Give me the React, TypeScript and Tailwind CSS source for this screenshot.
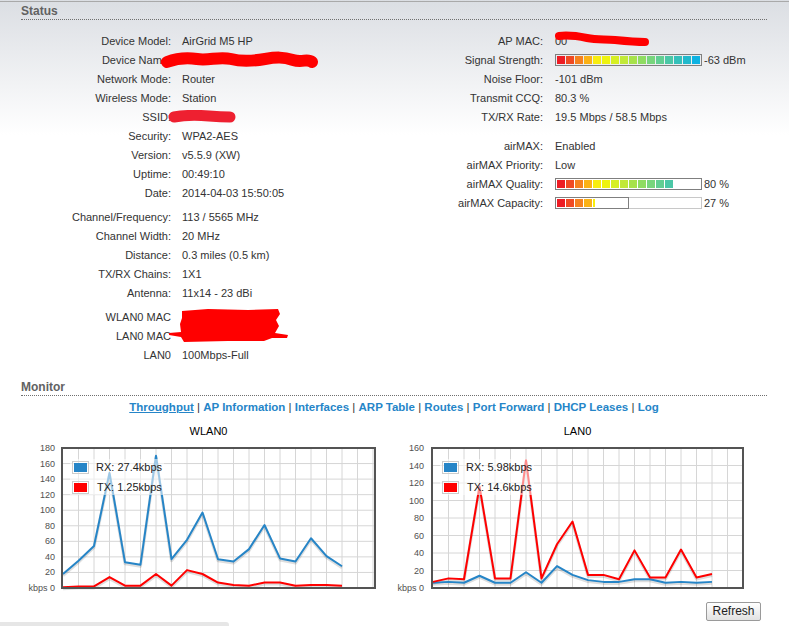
const SEG = [
  "bg-[#ed1c24]",
  "bg-[#f04a23]",
  "bg-[#f58220]",
  "bg-[#fbb216]",
  "bg-[#f8ed0e]",
  "bg-[#eef30f]",
  "bg-[#d6ef24]",
  "bg-[#c1e938]",
  "bg-[#a7e24a]",
  "bg-[#8fdc62]",
  "bg-[#78d57d]",
  "bg-[#62ce92]",
  "bg-[#4bc7a6]",
  "bg-[#35c0ba]",
  "bg-[#21b9cc]",
  "bg-[#0eb2e2]",
];

const TABS = [
  "Throughput",
  "AP Information",
  "Interfaces",
  "ARP Table",
  "Routes",
  "Port Forward",
  "DHCP Leases",
  "Log",
];

function Segs({ n, partial = false }: { n: number; partial?: boolean }) {
  return (
    <div className="flex gap-px">
      {SEG.slice(0, n).map((c, i) => (
        <div key={i} className={"h-[8px] w-[8px] " + c} />
      ))}
      {partial && <div className={"h-[8px] w-[2px] " + SEG[n]} />}
    </div>
  );
}

function Row({
  label,
  children,
  right = false,
}: {
  label: string;
  children?: React.ReactNode;
  right?: boolean;
}) {
  return (
    <div className="flex h-[19px] items-center">
      <div className={(right ? "w-[141px]" : "w-[150px]") + " shrink-0 text-right"}>{label}</div>
      <div className={(right ? "pl-[12px]" : "pl-[11px]") + " relative flex h-[19px] items-center whitespace-nowrap"}>
        {children}
      </div>
    </div>
  );
}

function Header({ title }: { title: string }) {
  return (
    <div className="border-b border-dotted border-[#6f6f6f] pb-px text-[12px] font-bold leading-[14px] text-[#626262]">
      {title}
    </div>
  );
}

type ChartProps = {
  title: string;
  max: number;
  step: number;
  rx: number[];
  tx: number[];
  rxLabel: string;
  txLabel: string;
  x0: number;
  w: number;
};

function Chart({ title, max, step, rx, tx, rxLabel, txLabel, x0, w }: ChartProps) {
  const y0 = 9;
  const y1 = 151;
  const top = y0 + 1;
  const bot = y1 - 1;
  const sy = (v: number) => bot - (v / max) * (bot - top);
  const sx = (i: number) => x0 + 2 + 15.5 * i;
  const pts = (d: number[]) => d.map((v, i) => `${sx(i)},${sy(v)}`).join(" ");
  const ticks: number[] = [];
  for (let v = 0; v <= max; v += step) ticks.push(v);
  const cols: number[] = [];
  for (let i = 1; sx(i) < x0 + w - 2; i++) cols.push(sx(i));

  return (
    <div className="w-[369px]">
      <div className="h-[13px] pl-[6px] text-center text-[11px] leading-[13px] text-black">{title}</div>
      <svg width={369} height={160} className="block">
        <rect x={x0} y={y0} width={w} height={y1 - y0} fill="#fff" />
        {cols.map((x) => (
          <line key={x} x1={x} x2={x} y1={y0} y2={y1} stroke="#d6d6d6" strokeWidth={1} />
        ))}
        {ticks.slice(1, -1).map((v) => (
          <line key={v} x1={x0} x2={x0 + w} y1={sy(v)} y2={sy(v)} stroke="#d6d6d6" strokeWidth={1} />
        ))}
        <g transform="translate(0,1.5)" fill="none" stroke="rgba(0,0,0,0.13)" strokeWidth={3} strokeLinejoin="round">
          <polyline points={pts(rx)} />
          <polyline points={pts(tx)} />
        </g>
        <polyline points={pts(rx)} fill="none" stroke="#2685c7" strokeWidth={2} strokeLinejoin="round" />
        <polyline points={pts(tx)} fill="none" stroke="#ff0000" strokeWidth={2} strokeLinejoin="round" />
        <rect x={x0 + 9} y={y0 + 12} width={94} height={36} fill="#fff" opacity={0.55} />
        <rect x={x0 + 11.5} y={y0 + 14.5} width={16} height={12} fill="none" stroke="#cccccc" />
        <rect x={x0 + 13} y={y0 + 16} width={13} height={9} fill="#2685c7" />
        <rect x={x0 + 11.5} y={y0 + 34.5} width={16} height={12} fill="none" stroke="#cccccc" />
        <rect x={x0 + 13} y={y0 + 36} width={13} height={9} fill="#ff0000" />
        <text x={x0 + 35} y={y0 + 24} fontSize={11} fill="#222">
          {rxLabel}
        </text>
        <text x={x0 + 36} y={y0 + 44} fontSize={11} fill="#222">
          {txLabel}
        </text>
        <rect x={x0 + 1} y={y0 + 1} width={w - 2} height={y1 - y0 - 2} fill="none" stroke="#545454" strokeWidth={2} />
        {ticks.map((v) => (
          <text key={v} x={34} y={sy(v) + 3} fontSize={9} fill="#505050" textAnchor="end">
            {v === 0 ? "kbps 0" : String(v)}
          </text>
        ))}
      </svg>
    </div>
  );
}

export default function App() {
  return (
    <div className="h-[626px] w-[789px] overflow-hidden bg-[linear-gradient(180deg,#dbdee3_0px,#ffffff_135px)] font-['Liberation_Sans',Arial,sans-serif] text-[11px] text-[#333]">
      <div className="mt-px h-px bg-[#a9a9a9]" />
      <div className="pl-[21px] pr-[22px]">
        <div className="pt-[2px]">
          <Header title="Status" />
        </div>

        <div className="mt-[11.5px] flex">
          {/* left column */}
          <div className="w-[381px] shrink-0">
            <Row label="Device Model:">AirGrid M5 HP</Row>
            <Row label="Device Name:">
              <svg className="absolute left-[-10px] top-0" width={158} height={19}>
                <path
                  d="M6 11 C 14 8, 24 6, 36 8 S 58 5, 70 8 S 92 10, 104 8 S 122 6, 132 9 S 146 7, 151 11"
                  fill="none"
                  stroke="#ff0000"
                  strokeWidth={12}
                  strokeLinecap="round"
                />
                <path d="M6 11 L 1 11" stroke="#ff0000" strokeWidth={4} strokeLinecap="round" />
              </svg>
            </Row>
            <Row label="Network Mode:">Router</Row>
            <Row label="Wireless Mode:">Station</Row>
            <Row label="SSID:">
              <svg className="absolute left-[-4px] top-[2px]" width={70} height={14}>
                <path
                  d="M7 7 C 18 5, 30 5, 42 6 S 56 7, 63 7"
                  fill="none"
                  stroke="#ee2030"
                  strokeWidth={11}
                  strokeLinecap="round"
                />
              </svg>
            </Row>
            <Row label="Security:">WPA2-AES</Row>
            <Row label="Version:">v5.5.9 (XW)</Row>
            <Row label="Uptime:">00:49:10</Row>
            <Row label="Date:">2014-04-03 15:50:05</Row>

            <div className="mt-[5px]">
              <Row label="Channel/Frequency:">113 / 5565 MHz</Row>
              <Row label="Channel Width:">20 MHz</Row>
              <Row label="Distance:">0.3 miles (0.5 km)</Row>
              <Row label="TX/RX Chains:">1X1</Row>
              <Row label="Antenna:">11x14 - 23 dBi</Row>
            </div>

            <div className="relative mt-[5px]">
              <Row label="WLAN0 MAC" />
              <Row label="LAN0 MAC" />
              <Row label="LAN0">100Mbps-Full</Row>
              <svg className="absolute left-[147px] top-0" width={122} height={36}>
                <path
                  d="M14 3 L 40 1 L 80 2 L 110 1 L 112 6 L 108 12 L 111 18 L 107 25 L 120 27 L 119 30 L 104 30 L 96 33 L 60 33 L 16 34 L 13 29 L 1 27 L 1 25 L 13 24 L 12 16 L 14 10 Z"
                  fill="#ff0000"
                />
              </svg>
            </div>
          </div>

          {/* right column */}
          <div className="flex-1">
            <Row label="AP MAC:" right>
              <span>00</span>
              <svg className="absolute left-[10px] top-[-1px]" width={98} height={17}>
                <path
                  d="M6 5 C 14 4, 24 5, 34 7 S 52 8, 62 9 S 82 11, 92 11"
                  fill="none"
                  stroke="#ff0000"
                  strokeWidth={8}
                  strokeLinecap="round"
                />
              </svg>
            </Row>
            <Row label="Signal Strength:" right>
              <div className="h-[12px] w-[147px] border border-[#7f7f7f] p-px">
                <Segs n={16} />
              </div>
              <span className="ml-[2px]">-63 dBm</span>
            </Row>
            <Row label="Noise Floor:" right>-101 dBm</Row>
            <Row label="Transmit CCQ:" right>80.3 %</Row>
            <Row label="TX/RX Rate:" right>19.5 Mbps / 58.5 Mbps</Row>

            <div className="mt-[10px]">
              <Row label="airMAX:" right>Enabled</Row>
              <Row label="airMAX Priority:" right>Low</Row>
              <Row label="airMAX Quality:" right>
                <div className="h-[12px] w-[147px] border border-[#7f7f7f] bg-white p-px">
                  <Segs n={13} />
                </div>
                <span className="ml-[2px]">80 %</span>
              </Row>
              <Row label="airMAX Capacity:" right>
                <div className="flex h-[12px] w-[147px] border border-[#c8c8c8] bg-white">
                  <div className="-m-px h-[12px] w-[74px] shrink-0 border border-[#7f7f7f] p-px">
                    <Segs n={4} partial />
                  </div>
                </div>
                <span className="ml-[2px]">27 %</span>
              </Row>
            </div>
          </div>
        </div>

        <div className="mt-[15.5px]">
          <Header title="Monitor" />
        </div>

        <div className="mt-[4px] text-center text-[11.5px] font-bold leading-[14px]">
          {TABS.map((t, i) => (
            <span key={t}>
              {i > 0 && <span className="font-normal text-[#333]">{" | "}</span>}
              <a className={"cursor-pointer text-[#2585c8]" + (i === 0 ? " underline" : "")}>{t}</a>
            </span>
          ))}
        </div>

        <div className="mt-[10.5px] flex">
          <Chart
            title="WLAN0"
            max={180}
            step={20}
            rx={[18, 35, 54, 148, 33, 30, 170, 37, 62, 97, 37, 34, 50, 81, 38, 34, 64, 41, 28]}
            tx={[1, 2, 2, 14, 3, 3, 18, 3, 23, 18, 7, 4, 3, 7, 7, 3, 4, 4, 3]}
            rxLabel="RX: 27.4kbps"
            txLabel="TX: 1.25kbps"
            x0={40}
            w={315}
          />
          <Chart
            title="LAN0"
            max={160}
            step={20}
            rx={[6, 7, 6, 14, 6, 6, 18, 6, 25, 15, 9, 7, 7, 10, 10, 6, 7, 6, 7]}
            tx={[7, 11, 10, 116, 11, 11, 146, 11, 50, 76, 15, 15, 10, 43, 12, 12, 44, 12, 16]}
            rxLabel="RX: 5.98kbps"
            txLabel="TX: 14.6kbps"
            x0={41}
            w={313}
          />
        </div>

        <div className="mt-[4.5px] flex justify-end pr-[6px]">
          <button className="h-[19px] w-[55px] rounded-[2px] border border-[#9a9a9a] bg-gradient-to-b from-white to-[#e2e2e2] text-[12px] leading-[17px] text-[#222]">
            Refresh
          </button>
        </div>
      </div>
      <div className="mt-px h-[4px] w-[229px] rounded-tr-[3px] bg-[#e6e6e6]" />
    </div>
  );
}
